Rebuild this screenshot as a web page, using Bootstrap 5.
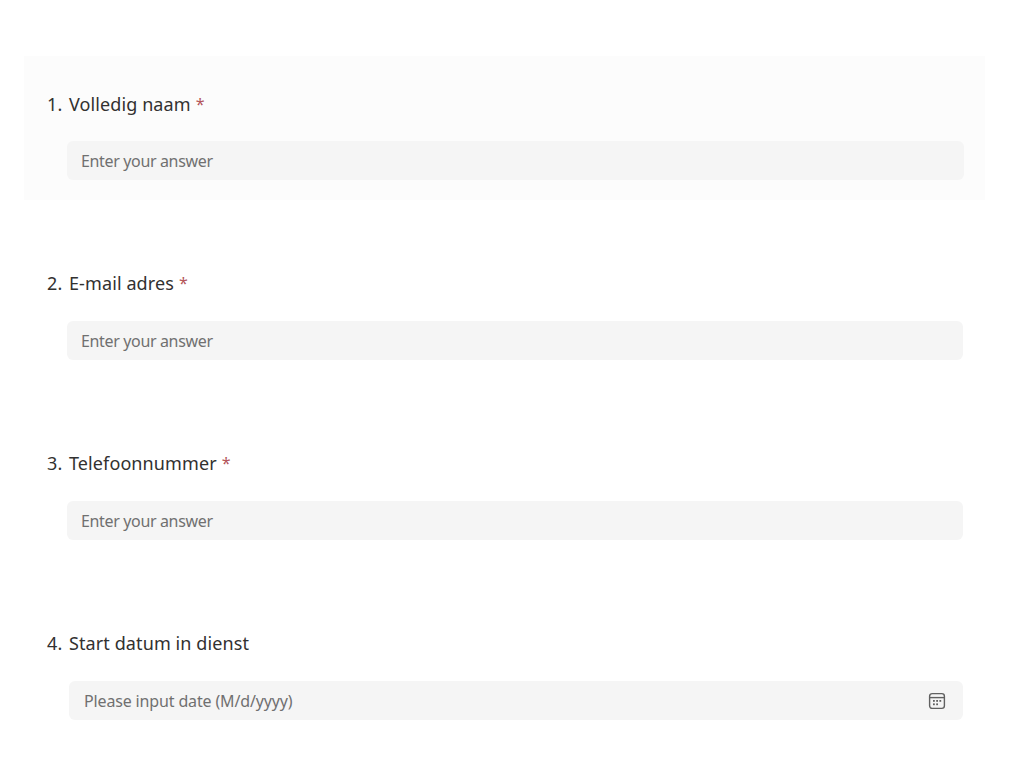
<!DOCTYPE html>
<html lang="en">
<head>
    <meta charset="UTF-8">
    <meta name="viewport" content="width=device-width, initial-scale=1.0">
    <title>Formulier</title>
    <link href="https://cdn.jsdelivr.net/npm/bootstrap@5.3.0/dist/css/bootstrap.min.css" rel="stylesheet">
    <script src="https://cdn.jsdelivr.net/npm/bootstrap@5.3.0/dist/js/bootstrap.bundle.min.js"></script>

    <style>
        body {
            background: #fff;
            font-family: "Noto Sans", "Open Sans", sans-serif;
            color: #323130;
        }
        .form-page {
            width: 961px;
            margin-left: 24px;
            padding-top: 56px;
            gap: 36px;
        }
        .question {
            height: 144px;
            padding: 35px 21px 0 23px;
        }
        .question-active {
            background: #fcfcfc;
            padding-top: 36px;
        }
        .question-title {
            font-size: 18px;
            letter-spacing: 0.1px;
            line-height: 24px;
            height: 24px;
            margin-bottom: 26px;
        }
        .question-active .question-title {
            margin-bottom: 25px;
        }
        .question-num {
            width: 22px;
        }
        .required-mark {
            color: #b4555a;
            margin-left: 5px;
            font-size: 16px;
            line-height: 1;
            vertical-align: 1px;
        }
        .answer-input.form-control {
            height: 39px;
            width: 896px;
            margin-left: 20px;
            padding: 0 14px;
            background: #f5f5f5;
            border: 0;
            border-radius: 6px;
            font-size: 16px;
            letter-spacing: -0.35px;
            color: #242424;
            box-shadow: none;
        }
        .question-active .answer-input.form-control {
            width: 897px;
        }
        .answer-input.form-control::placeholder {
            color: #707070;
            opacity: 1;
        }
        .date-wrap {
            margin-left: 22px;
            width: 894px;
        }
        .date-wrap .answer-input.form-control {
            width: 100%;
            margin-left: 0;
            padding-left: 15px;
            letter-spacing: -0.15px;
        }
        .date-icon {
            position: absolute;
            right: 16px;
            top: 10px;
            width: 20px;
            height: 20px;
        }
    </style>
</head>
<body>

    <form class="form-page d-flex flex-column">

        <!-- Question 1 -->
        <div class="question question-active">
            <div class="question-title d-flex">
                <span class="question-num">1.</span>
                <span>Volledig naam<span class="required-mark">*</span></span>
            </div>
            <input type="text" class="form-control answer-input" placeholder="Enter your answer">
        </div>

        <!-- Question 2 -->
        <div class="question">
            <div class="question-title d-flex">
                <span class="question-num">2.</span>
                <span>E-mail adres<span class="required-mark">*</span></span>
            </div>
            <input type="text" class="form-control answer-input" placeholder="Enter your answer">
        </div>

        <!-- Question 3 -->
        <div class="question">
            <div class="question-title d-flex">
                <span class="question-num">3.</span>
                <span>Telefoonnummer<span class="required-mark">*</span></span>
            </div>
            <input type="text" class="form-control answer-input" placeholder="Enter your answer">
        </div>

        <!-- Question 4 -->
        <div class="question">
            <div class="question-title d-flex">
                <span class="question-num">4.</span>
                <span>Start datum in dienst</span>
            </div>
            <div class="date-wrap position-relative">
                <input type="text" class="form-control answer-input" placeholder="Please input date (M/d/yyyy)">
                <svg class="date-icon" viewBox="0 0 20 20" fill="none" stroke="#616161" stroke-width="1.4">
                    <rect x="2.6" y="2.6" width="14.8" height="14.8" rx="2.6"/>
                    <path d="M2.6 6.6h14.8"/>
                    <g fill="#616161" stroke="none">
                        <rect x="6" y="9" width="1.8" height="1.8"/>
                        <rect x="9.2" y="9" width="1.8" height="1.8"/>
                        <rect x="12.4" y="9" width="1.8" height="1.8"/>
                        <rect x="6" y="12.4" width="1.8" height="1.8"/>
                        <rect x="9.2" y="12.4" width="1.8" height="1.8"/>
                    </g>
                </svg>
            </div>
        </div>

    </form>

</body>
</html>
